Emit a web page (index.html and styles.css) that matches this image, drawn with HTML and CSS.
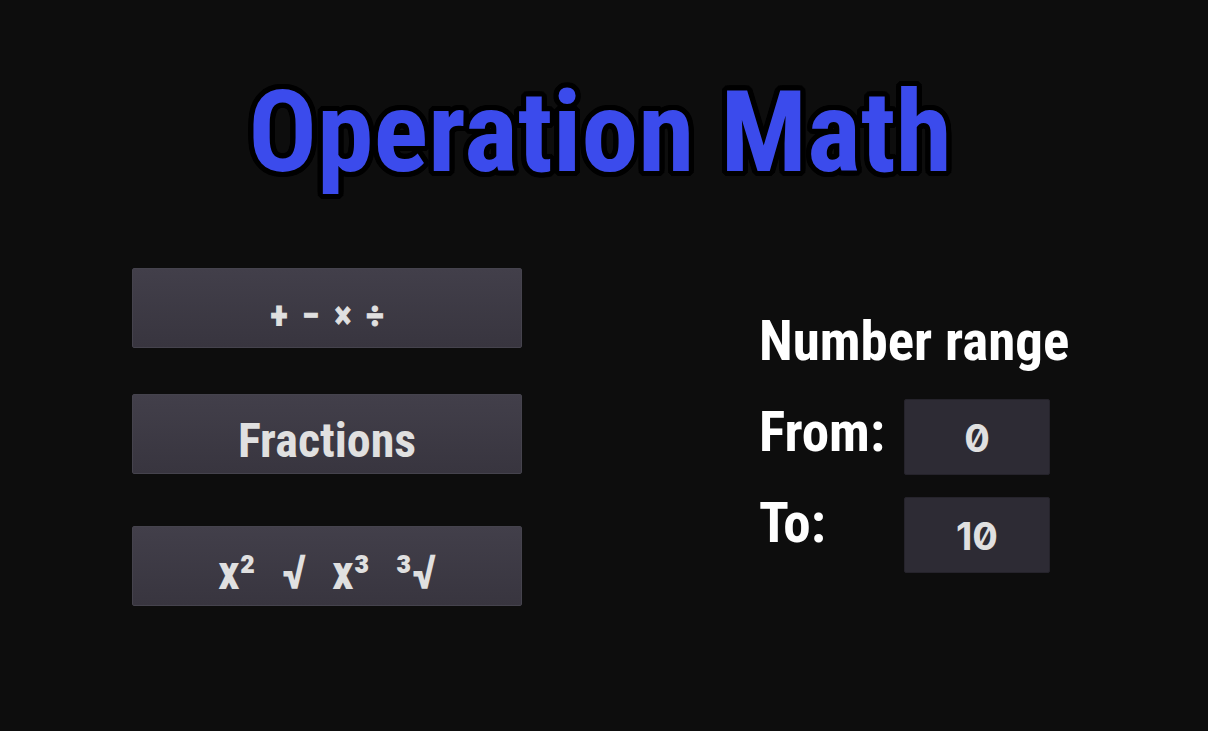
FILE: index.html
```html
<!DOCTYPE html>
<html lang="en">
<head>
<meta charset="utf-8">
<meta name="viewport" content="width=device-width, initial-scale=1">
<title>Operation Math</title>
<link rel="stylesheet" href="styles.css">
</head>
<body>
<main class="menu">
  <h1 class="title">Operation Math</h1>
  <div class="panels">
    <nav class="modes" aria-label="Game modes">
      <button class="mode mode-basic" type="button"><span>+</span><span>−</span><span>×</span><span>÷</span></button>
      <button class="mode" type="button">Fractions</button>
      <button class="mode mode-powers" type="button"><span>x²</span><span>√</span><span>x³</span><span>³√</span></button>
    </nav>
    <section class="range">
      <h2 class="range-title">Number range</h2>
      <div class="range-form">
        <div class="range-labels">
          <label for="from">From:</label>
          <label for="to">To:</label>
        </div>
        <div class="range-inputs">
          <input id="from" type="text" inputmode="numeric" value="0">
          <input id="to" type="text" inputmode="numeric" value="10">
        </div>
      </div>
    </section>
  </div>
</main>
</body>
</html>
```

FILE: styles.css
```css
* {
  box-sizing: border-box;
}

body {
  margin: 0;
  min-height: 100vh;
  background: #0d0d0d;
  color: #fff;
  font-family: "Roboto Condensed", "Liberation Sans Narrow", "DejaVu Sans Condensed", sans-serif;
  font-weight: 700;
}

.menu {
  padding: 64px 0 48px;
}

/* The outline is a ring of hard shadows, which keeps its corners round. */
.title {
  margin: 0;
  padding-right: 8px;
  color: #3b4bec;
  font-size: 114px;
  line-height: 136px;
  text-align: center;
  text-shadow:
    5px 0 #000, 4px 3px #000, 3px 4px #000, 0 5px #000,
    -3px 4px #000, -4px 3px #000, -5px 0 #000, -4px -3px #000,
    -3px -4px #000, 0 -5px #000, 3px -4px #000, 4px -3px #000,
    5px 2px #000, 2px 5px #000, -2px 5px #000, -5px 2px #000,
    -5px -2px #000, -2px -5px #000, 2px -5px #000, 5px -2px #000;
}

.panels {
  display: flex;
  justify-content: space-between;
  gap: 48px;
  padding: 68px 143px 0 132px;
}

.modes {
  display: flex;
  flex: 0 1 390px;
  flex-direction: column;
  gap: 46px;
}

.mode {
  display: flex;
  align-items: center;
  justify-content: center;
  height: 80px;
  padding: 12px 0 0;
  border: 1px solid #45434d;
  border-radius: 2px;
  background: linear-gradient(#423f4a, #38353f);
  color: #e0e0e0;
  font: inherit;
  font-size: 48px;
}

.mode-basic {
  gap: 12px;
  padding-top: 16px;
  font-size: 36px;
  -webkit-text-stroke: 1px currentcolor;
}

.mode-basic span {
  width: 20px;
}

.mode-powers {
  gap: 26px;
  margin-top: 6px;
}

.range {
  width: 306px;
  padding-top: 40px;
}

.range-title,
.range-labels {
  margin: 0;
  font-size: 55px;
  font-weight: 700;
}

.range-title {
  line-height: 66px;
  white-space: nowrap;
}

.range-form {
  display: flex;
  justify-content: space-between;
  padding: 25px 15px 0 0;
}

.range-labels {
  display: flex;
  flex-direction: column;
  gap: 25px;
  line-height: 66px;
}

.range-inputs {
  display: flex;
  flex: 0 0 146px;
  flex-direction: column;
  gap: 22px;
}

.range-inputs input {
  width: 100%;
  height: 76px;
  padding: 2px 0 0;
  border: 1px solid #25232b;
  border-radius: 2px;
  background: #2d2b34;
  color: #e0e0e0;
  font-family: Inter, sans-serif;
  font-size: 38px;
  font-weight: 700;
  font-feature-settings: "zero";
  text-align: center;
}
```
